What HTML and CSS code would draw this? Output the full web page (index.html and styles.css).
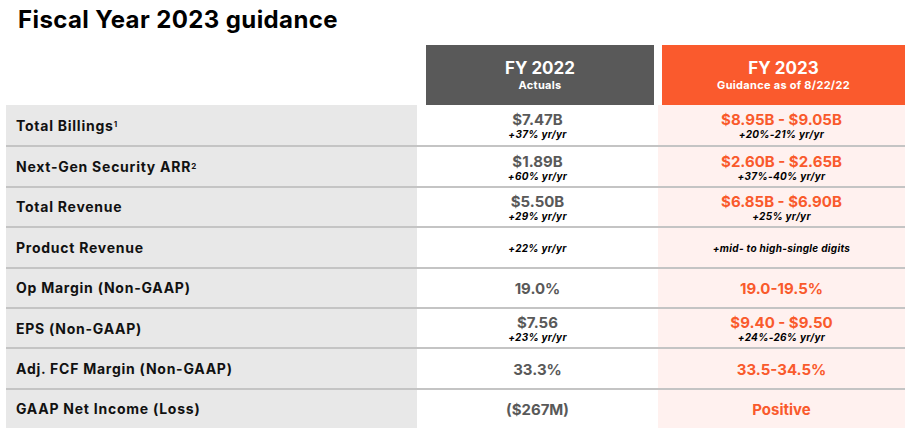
FILE: index.html
```html
<!DOCTYPE html>
<html>
<head>
<meta charset="utf-8">
<link rel="stylesheet" href="styles.css">
</head>
<body>
<div class="page">
  <h1 class="title">Fiscal Year 2023 guidance</h1>
  <div class="head">
    <div class="head-spacer"></div>
    <div class="head-box head-dark">
      <div class="head-main">FY 2022</div>
      <div class="head-sub">Actuals</div>
    </div>
    <div class="head-box head-orange">
      <div class="head-main">FY 2023</div>
      <div class="head-sub">Guidance as of 8/22/22</div>
    </div>
  </div>
  <div class="table">
    <div class="row">
      <div class="label">Total Billings<sup>1</sup></div>
      <div class="cell"><div class="val">$7.47B</div><div class="sub">+37% yr/yr</div></div>
      <div class="cell tint"><div class="val orange">$8.95B - $9.05B</div><div class="sub">+20%-21% yr/yr</div></div>
    </div>
    <div class="row">
      <div class="label">Next-Gen Security ARR<sup>2</sup></div>
      <div class="cell"><div class="val">$1.89B</div><div class="sub">+60% yr/yr</div></div>
      <div class="cell tint"><div class="val orange">$2.60B - $2.65B</div><div class="sub">+37%-40% yr/yr</div></div>
    </div>
    <div class="row">
      <div class="label">Total Revenue</div>
      <div class="cell"><div class="val">$5.50B</div><div class="sub">+29% yr/yr</div></div>
      <div class="cell tint"><div class="val orange">$6.85B - $6.90B</div><div class="sub">+25% yr/yr</div></div>
    </div>
    <div class="row">
      <div class="label">Product Revenue</div>
      <div class="cell"><div class="sub">+22% yr/yr</div></div>
      <div class="cell tint"><div class="sub">+mid- to high-single digits</div></div>
    </div>
    <div class="row">
      <div class="label">Op Margin (Non-GAAP)</div>
      <div class="cell"><div class="val">19.0%</div></div>
      <div class="cell tint"><div class="val orange">19.0-19.5%</div></div>
    </div>
    <div class="row">
      <div class="label">EPS (Non-GAAP)</div>
      <div class="cell"><div class="val">$7.56</div><div class="sub">+23% yr/yr</div></div>
      <div class="cell tint"><div class="val orange">$9.40 - $9.50</div><div class="sub">+24%-26% yr/yr</div></div>
    </div>
    <div class="row">
      <div class="label">Adj. FCF Margin (Non-GAAP)</div>
      <div class="cell"><div class="val">33.3%</div></div>
      <div class="cell tint"><div class="val orange">33.5-34.5%</div></div>
    </div>
    <div class="row">
      <div class="label">GAAP Net Income (Loss)</div>
      <div class="cell"><div class="val">($267M)</div></div>
      <div class="cell tint"><div class="val orange">Positive</div></div>
    </div>
  </div>
</div>
</body>
</html>
```
FILE: styles.css
```css
html, body {
  margin: 0;
  padding: 0;
  background: #ffffff;
}
.page {
  width: 911px;
  height: 439px;
  font-family: Inter, "Open Sans", sans-serif;
  color: #111;
}
.title {
  margin: 0;
  padding: 5px 0 0 18px;
  height: 30px;
  font-size: 24px;
  line-height: 30px;
  font-weight: 700;
  color: #000;
  letter-spacing: 0.4px;
}
.head {
  display: grid;
  grid-template-columns: 418px 228px 243px;
  column-gap: 8px;
  margin-top: 10px;
  height: 61px;
}
.head-box {
  display: flex;
  flex-direction: column;
  align-items: center;
  justify-content: center;
  color: #fff;
  padding-bottom: 2px;
}
.head-dark { background: #595959; }
.head-orange { background: #fa5a2d; }
.head-main {
  font-size: 17px;
  font-weight: 700;
  line-height: 20px;
}
.head-sub {
  font-size: 11px;
  font-weight: 700;
  line-height: 14px;
  letter-spacing: 0.3px;
}
.table {
  margin-left: 6px;
  width: 899px;
  margin-top: -1px;
}
.row {
  display: grid;
  grid-template-columns: 411px 241px 247px;
  height: 40.4px;
  box-sizing: border-box;
}
.row + .row {
  border-top: 2px solid #c4c4c4;
}
.label {
  background: #e8e8e8;
  display: flex;
  align-items: center;
  padding-left: 10px;
  font-size: 14px;
  font-weight: 700;
  color: #111;
  letter-spacing: 0.75px;
}
.label sup {
  font-size: 8px;
  line-height: 0;
  position: relative;
  top: -1px;
  margin-left: 0;
  letter-spacing: 0;
}
.cell {
  display: flex;
  flex-direction: column;
  align-items: center;
  justify-content: center;
  background: #ffffff;
  padding-top: 2px;
}
.cell.tint { background: #fff1ef; }
.val {
  font-size: 15px;
  font-weight: 700;
  color: #595959;
  line-height: 17px;
}
.val.orange { color: #f95a2c; }
.sub {
  font-size: 10px;
  font-weight: 700;
  font-style: italic;
  color: #000;
  line-height: 13px;
  letter-spacing: 0.3px;
}
```
